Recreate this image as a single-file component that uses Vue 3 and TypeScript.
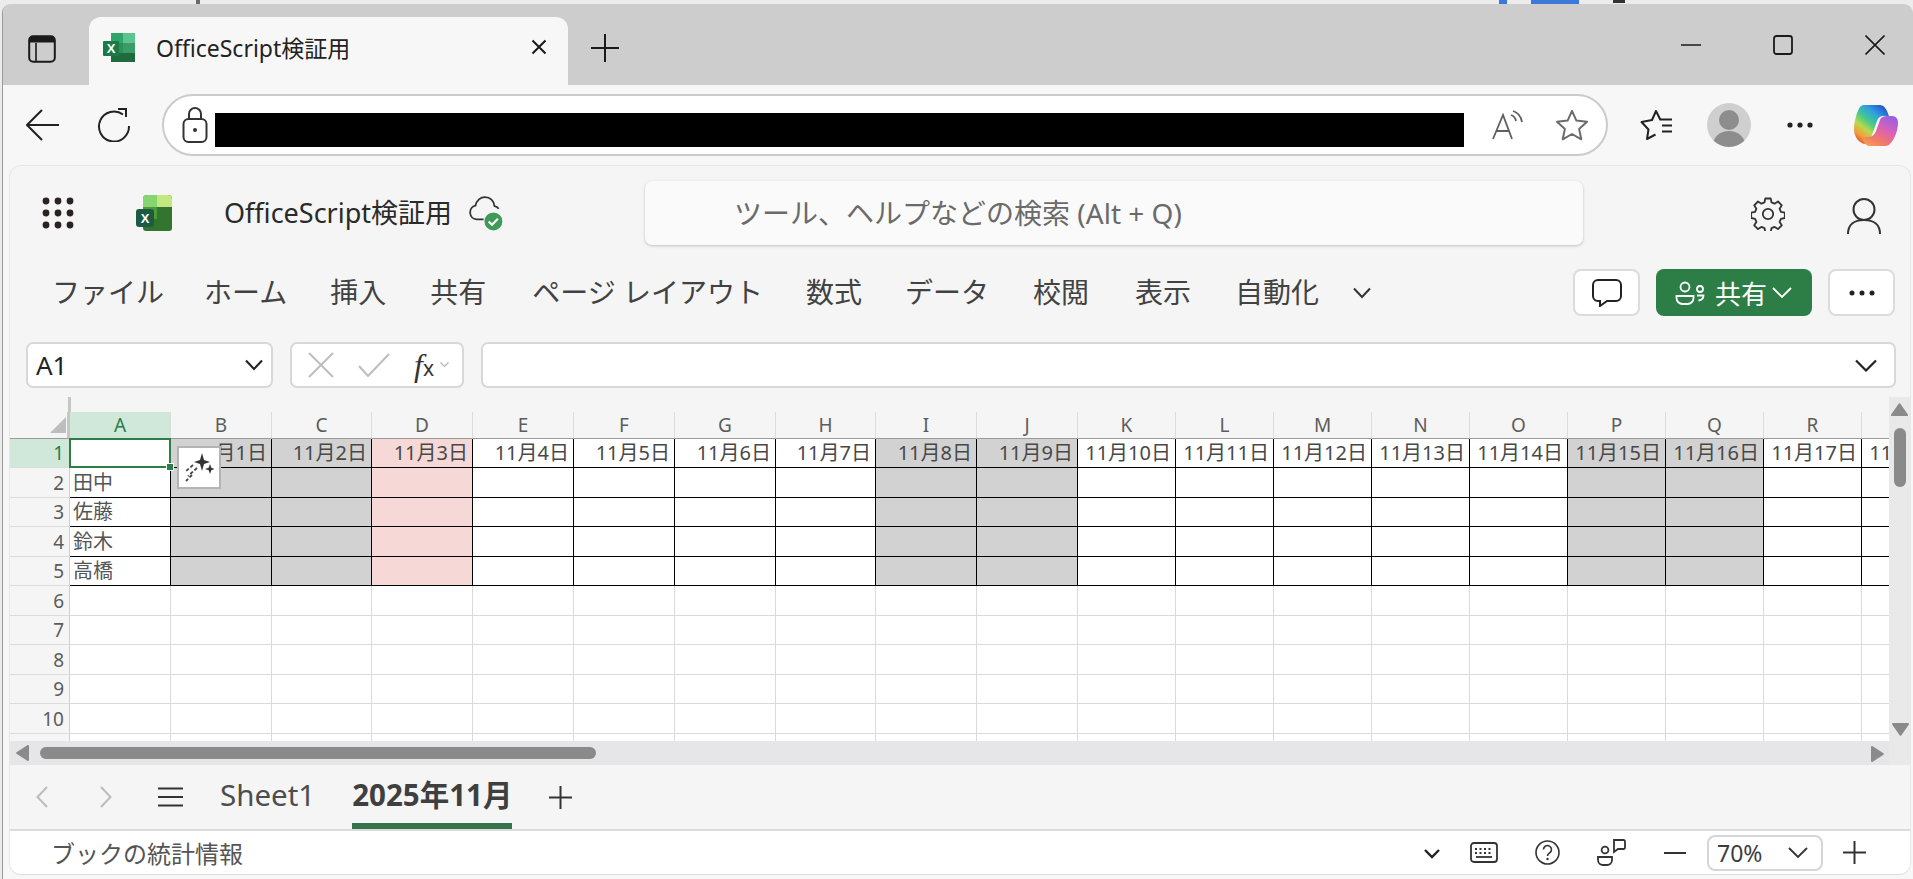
<script setup lang="ts">
interface Col { letter: string; width: number; date: string; tone: string }
const widths = [101,101,100,101,101,101,101,100,101,101,98,98,98,98,98,98,98,98,98]
const letters = 'ABCDEFGHIJKLMNOPQRS'.split('')
const weekend = ['B','C','I','J','P','Q']
const cols: Col[] = letters.map((letter, i) => ({
  letter,
  width: widths[i],
  date: i === 0 ? '' : `11月${i}日`,
  tone: weekend.includes(letter) ? 'gray' : letter === 'D' ? 'pink' : ''
}))
const rowHeights = [29,30,29,30,29,30,29,30,29,30,29]
const names = ['', '田中', '佐藤', '鈴木', '高橋']
const gridTemplate = {
  gridTemplateColumns: `60px ${widths.map(w => w + 'px').join(' ')}`,
  gridTemplateRows: `27px ${rowHeights.map(h => h + 'px').join(' ')}`
}
const menus = ['ファイル','ホーム','挿入','共有','ページ レイアウト','数式','データ','校閲','表示','自動化']
function cellClass(r: number, c: Col): string[] {
  const out: string[] = ['cell']
  if (r < 5) {
    out.push('ruled')
    if (c.tone) out.push(c.tone)
  }
  return out
}
</script>

<template>
  <div class="desk">
    <i class="bit b1"></i><i class="bit b2"></i><i class="bit b3"></i><i class="bit b4"></i>
    <div class="win">
      <div class="tabstrip">
        <svg class="panel-ic" width="28" height="28" viewBox="0 0 28 28"><rect x="1.2" y="1.2" width="25.6" height="25.6" rx="4" fill="none" stroke="#1a1a1a" stroke-width="2"/><path d="M1 7.5V5a4 4 0 0 1 4-4h18a4 4 0 0 1 4 4v2.500z" fill="#1a1a1a"/><path d="M8 8v19" stroke="#1a1a1a" stroke-width="1.600"/></svg>
        <div class="tab">
          <svg width="32" height="29" viewBox="0 0 32 29"><rect x="8" y="0" width="24" height="29" rx="1.500" fill="#2f8f57"/><rect x="20" y="0" width="12" height="10" fill="#5cc58f"/><rect x="8" y="0" width="12" height="10" fill="#2fa56c"/><rect x="20" y="10" width="12" height="10" fill="#3a9d68"/><rect x="8" y="20" width="24" height="9" fill="#1f6b3c"/><rect x="0" y="8" width="16" height="15" rx="1" fill="#1b7b47"/><text x="8" y="20" text-anchor="middle" class="xl">X</text></svg>
          <span class="tab-title">OfficeScript検証用</span>
          <svg class="tab-x" width="16" height="16" viewBox="0 0 16 16"><path d="M1.500 1.500l13 13M14.500 1.500l-13 13" stroke="#1a1a1a" stroke-width="2" fill="none"/></svg>
        </div>
        <svg class="new-tab" width="28" height="28" viewBox="0 0 28 28"><path d="M14 0v28M0 14h28" stroke="#1a1a1a" stroke-width="2"/></svg>
        <div class="winctl">
          <svg width="20" height="20" viewBox="0 0 20 20"><path d="M0 10h20" stroke="#1a1a1a" stroke-width="1.600"/></svg>
          <svg width="20" height="20" viewBox="0 0 20 20"><rect x="1" y="1" width="18" height="18" rx="2.500" fill="none" stroke="#1a1a1a" stroke-width="1.800"/></svg>
          <svg width="20" height="20" viewBox="0 0 20 20"><path d="M0.500 0.500l19 19M19.500 0.500l-19 19" stroke="#1a1a1a" stroke-width="1.600"/></svg>
        </div>
      </div>

      <div class="toolbar">
        <svg class="back" width="34" height="32" viewBox="0 0 34 32"><path d="M1 16h32M16 1L1 16l15 15" fill="none" stroke="#222" stroke-width="2"/></svg>
        <svg class="reload" width="34" height="34" viewBox="0 0 34 34"><path d="M26 6.500A15 15 0 1 0 32 18" fill="none" stroke="#222" stroke-width="2"/><path d="M21 1h8v8" fill="none" stroke="#222" stroke-width="2"/></svg>
        <div class="address">
          <svg class="lock" width="26" height="38" viewBox="0 0 26 38"><rect x="1.500" y="13" width="23" height="23" rx="5" fill="none" stroke="#333" stroke-width="2"/><path d="M7 13V8a6 6 0 0 1 12 0v5" fill="none" stroke="#333" stroke-width="2"/><circle cx="13" cy="24" r="2" fill="#333"/></svg>
          <div class="blackout"></div>
          <svg class="aloud" width="32" height="30" viewBox="0 0 32 30"><path d="M1 29L11 5l9 24M4.500 21h13" fill="none" stroke="#5f5f5f" stroke-width="1.800"/><path d="M19 5c3 1 4.500 3 5 6M21 1c5 1.500 8 5 9 11" fill="none" stroke="#5f5f5f" stroke-width="1.800"/></svg>
          <svg class="star" width="34" height="32" viewBox="0 0 34 32"><path d="M17 2l4.400 9.600 10.600 1.200-7.900 7.100 2.200 10.400L17 25l-9.300 5.300 2.200-10.400L2 12.800l10.600-1.200z" fill="none" stroke="#6b6b6b" stroke-width="2" stroke-linejoin="round"/></svg>
        </div>
        <svg class="favs" width="34" height="32" viewBox="0 0 34 32"><path d="M20.500 11L16 2l-4 9-10.500 2 7 7.500L7 30l8.500-4.500" fill="none" stroke="#222" stroke-width="2" stroke-linejoin="round"/><path d="M20 10.500h12M22 16.500h10M22 22.500h10" stroke="#222" stroke-width="2"/></svg>
        <svg class="avatar" width="44" height="44" viewBox="0 0 44 44"><defs><clipPath id="avc"><circle cx="22" cy="22" r="22"/></clipPath></defs><circle cx="22" cy="22" r="22" fill="#cfcfcf"/><g clip-path="url(#avc)"><circle cx="22" cy="17" r="10" fill="#8d8d8d"/><ellipse cx="22" cy="42" rx="16" ry="14" fill="#8d8d8d"/></g></svg>
        <svg class="tdots" width="26" height="6" viewBox="0 0 26 6"><circle cx="3" cy="3" r="2.600" fill="#222"/><circle cx="13" cy="3" r="2.600" fill="#222"/><circle cx="23" cy="3" r="2.600" fill="#222"/></svg>
        <svg class="copilot" width="44" height="42" viewBox="0 0 44 42"><defs><linearGradient id="cp1" x1=".9" y1="0" x2=".2" y2="1"><stop offset="0" stop-color="#2443c4"/><stop offset=".28" stop-color="#2f9fe2"/><stop offset=".5" stop-color="#45c98d"/><stop offset=".68" stop-color="#b9d84c"/><stop offset=".85" stop-color="#f2a03e"/><stop offset="1" stop-color="#e6512b"/></linearGradient><linearGradient id="cp2" x1=".9" y1="0" x2=".25" y2="1"><stop offset="0" stop-color="#8f5fe8"/><stop offset=".45" stop-color="#dc62b4"/><stop offset=".8" stop-color="#f27c62"/><stop offset="1" stop-color="#f39a54"/></linearGradient></defs><path d="M10 1H25C29 1 31 3 33 7L35 12H30C26 12 24 14 23 17L18 31C16 37 13 40 10 40C4 38 0 32 0 25C0 18 3 7 6 3C7 2 8 1 10 1Z" fill="url(#cp1)"/><path d="M34 12H38C42 12 44 15 44 19C44 27 40 36 36 40C35 41 33 42 31 42H16C13 42 11 40 10 38L8 33H15C18 33 21 30 22 27L26 16C27 13 30 12 34 12Z" fill="url(#cp2)"/></svg>
      </div>

      <div class="card">
        <header class="apphead">
          <svg class="apps" width="32" height="32" viewBox="0 0 32 32"><g fill="#2b2320"><circle cx="4" cy="4" r="3.400"/><circle cx="16" cy="4" r="3.400"/><circle cx="28" cy="4" r="3.400"/><circle cx="4" cy="16" r="3.400"/><circle cx="16" cy="16" r="3.400"/><circle cx="28" cy="16" r="3.400"/><circle cx="4" cy="28" r="3.400"/><circle cx="16" cy="28" r="3.400"/><circle cx="28" cy="28" r="3.400"/></g></svg>
          <svg class="xlapp" width="36" height="36" viewBox="0 0 36 36"><path d="M7 4a4 4 0 0 1 4-4h21a4 4 0 0 1 4 4v29a3 3 0 0 1-3 3H10a3 3 0 0 1-3-3z" fill="#33752f"/><path d="M7 4a4 4 0 0 1 4-4h10v12H7z" fill="#87d56e"/><path d="M21 0h11a4 4 0 0 1 4 4v8H21z" fill="#c1e97f"/><path d="M7 12h14v12H7z" fill="#4b9a3a"/><rect x="0" y="14" width="18" height="18" rx="3" fill="#1c5a41"/><text x="9" y="28" text-anchor="middle" class="xl2">X</text></svg>
          <span class="docname">OfficeScript検証用</span>
          <svg class="cloud" width="36" height="36" viewBox="0 0 34 34"><path d="M20 22H8a6.500 6.500 0 0 1-1-12.800C8 4 12 1 16 1c5 0 8.500 3.500 9 8.500 1.500.3 3 1 4 2.500" fill="none" stroke="#333" stroke-width="1.700"/><circle cx="24" cy="24" r="9" fill="#3f9a58" stroke="#f5f5f5" stroke-width="1"/><path d="M19.500 24l3.200 3.200 5.500-5.700" fill="none" stroke="#fff" stroke-width="2"/></svg>
          <div class="search">ツール、ヘルプなどの検索 (Alt + Q)</div>
          <svg class="gear" width="34" height="34" viewBox="0 0 34 34"><g fill="none" stroke="#333" stroke-width="1.800" stroke-linejoin="round"><path d="M14.300 1.500h5.400l.8 3.900 3.100 1.300 3.400-2.200 3.800 3.800-2.200 3.400 1.300 3.100 3.900.8v5.400l-3.900.8-1.300 3.100 2.200 3.400-3.800 3.800-3.400-2.200-3.100 1.300-.8 3.900h-5.400l-.8-3.900-3.100-1.300-3.400 2.200-3.800-3.800 2.200-3.400-1.300-3.100-3.900-.8v-5.400l3.900-.8 1.300-3.100-2.200-3.400 3.800-3.800 3.400 2.200 3.100-1.300z"/><circle cx="17" cy="17" r="5.200"/></g></svg>
          <svg class="user" width="34" height="38" viewBox="0 0 34 38"><circle cx="17" cy="12.500" r="10.500" fill="none" stroke="#333" stroke-width="2"/><path d="M1 37c0-9 6-14 16-14s16 5 16 14" fill="none" stroke="#333" stroke-width="2"/></svg>
        </header>

        <nav class="menus">
          <span v-for="m in menus" :key="m" class="menu">{{ m }}</span>
          <svg class="menu-more" width="18" height="12" viewBox="0 0 18 12"><path d="M1 1.500l8 8.500 8-8.500" fill="none" stroke="#333" stroke-width="2"/></svg>
          <div class="menu-right">
            <button class="wbtn">
              <svg width="30" height="28" viewBox="0 0 30 28"><path d="M6 1h18a5 5 0 0 1 5 5v11a5 5 0 0 1-5 5H15l-7 5v-5H6a5 5 0 0 1-5-5V6a5 5 0 0 1 5-5z" fill="none" stroke="#222" stroke-width="2"/></svg>
            </button>
            <button class="share">
              <svg width="30" height="24" viewBox="0 0 30 24"><circle cx="10" cy="6" r="4.500" fill="none" stroke="#fff" stroke-width="1.800"/><circle cx="25" cy="8" r="3" fill="none" stroke="#fff" stroke-width="1.800"/><path d="M1.500 15h17v2a6 6 0 0 1-6 6h-5a6 6 0 0 1-6-6z" fill="none" stroke="#fff" stroke-width="1.800"/><path d="M22 14.500h6.500c0 3-1.500 4.500-5 5" fill="none" stroke="#fff" stroke-width="1.800"/></svg>
              <span class="share-text">共有</span>
              <svg width="20" height="12" viewBox="0 0 20 12"><path d="M1 1l9 9 9-9" fill="none" stroke="#fff" stroke-width="1.800"/></svg>
            </button>
            <button class="wbtn more">
              <svg width="26" height="6" viewBox="0 0 26 6"><circle cx="3" cy="3" r="2.500" fill="#222"/><circle cx="13" cy="3" r="2.500" fill="#222"/><circle cx="23" cy="3" r="2.500" fill="#222"/></svg>
            </button>
          </div>
        </nav>

        <div class="fbar">
          <div class="fbox namebox">
            <span>A1</span>
            <svg width="18" height="12" viewBox="0 0 18 12"><path d="M1 1.500l8 8.500 8-8.500" fill="none" stroke="#222" stroke-width="2"/></svg>
          </div>
          <div class="fbox fxbox">
            <svg width="26" height="26" viewBox="0 0 26 26"><path d="M1 1l24 24M25 1L1 25" stroke="#bdbdbd" stroke-width="2"/></svg>
            <svg width="32" height="24" viewBox="0 0 32 24"><path d="M1 13l9 10L31 1" fill="none" stroke="#bdbdbd" stroke-width="2"/></svg>
            <span class="fx"><i>f</i><small>x</small></span>
            <svg width="9" height="6" viewBox="0 0 9 6"><path d="M.5.500l4 4 4-4" fill="none" stroke="#b5b5b5" stroke-width="1.200"/></svg>
          </div>
          <div class="fbox finput">
            <svg width="22" height="13" viewBox="0 0 22 13"><path d="M1 1.500l10 10 10-10" fill="none" stroke="#222" stroke-width="2.200"/></svg>
          </div>
        </div>

        <div class="sheetzone">
          <div class="sheetmain">
            <div class="freeze"></div>
            <div class="gridclip">
              <div class="grid" :style="gridTemplate">
                <div class="corner"><i class="tri"></i></div>
                <div v-for="(c, i) in cols" :key="c.letter" class="colh" :class="{ on: i === 0 }">{{ c.letter === 'S' ? '' : c.letter }}</div>
                <template v-for="(h, r) in rowHeights" :key="r">
                  <div class="rowh" :class="{ on: r === 0 }">{{ r < 10 ? r + 1 : '' }}</div>
                  <div v-for="(c, i) in cols" :key="c.letter" :class="cellClass(r, c)">
                    <span v-if="i === 0 && r < 5" class="name">{{ names[r] }}</span>
                    <span v-else-if="r === 0" class="date">{{ c.date }}</span>
                  </div>
                </template>
              </div>
              <div class="selection"><i class="handle"></i></div>
              <div class="magic">
                <svg width="30" height="30" viewBox="0 0 30 30"><path d="M18 0l2 7 6 2-6 2-2 7-2-7-6-2 6-2z" fill="#333"/><path d="M26 11l1.300 3.700 3.700 1.300-3.700 1.300L26 21l-1.300-3.700L21 16l3.700-1.300z" fill="#333"/><path d="M9 12l-8 7M13 15l-9 8M8 22l-6 6" stroke="#444" stroke-width="1.800" stroke-dasharray="3.500 2" fill="none"/></svg>
              </div>
            </div>
            <div class="hscroll">
              <svg width="13" height="16" viewBox="0 0 13 16"><path d="M13 1v14a1 1 0 0 1-1.700.7L.5 8.700a1 1 0 0 1 0-1.400L11.300.3A1 1 0 0 1 13 1z" fill="#8a8a8a"/></svg>
              <div class="hthumb"></div>
            </div>
          </div>
          <div class="vscroll">
            <svg width="17" height="13" viewBox="0 0 17 13"><path d="M1 13h15a1 1 0 0 0 .7-1.700L9.200.5a1 1 0 0 0-1.400 0L.3 11.300A1 1 0 0 0 1 13z" fill="#8a8a8a"/></svg>
            <div class="vthumb"></div>
            <svg class="vdown" width="17" height="13" viewBox="0 0 17 13"><path d="M1 0h15a1 1 0 0 1 .7 1.700L9.200 12.500a1 1 0 0 1-1.400 0L.3 1.700A1 1 0 0 1 1 0z" fill="#8a8a8a"/></svg>
            <svg class="hright" width="13" height="16" viewBox="0 0 13 16"><path d="M0 1v14a1 1 0 0 0 1.700.7l10.800-7a1 1 0 0 0 0-1.400L1.700.3A1 1 0 0 0 0 1z" fill="#8a8a8a"/></svg>
          </div>
        </div>

        <div class="sheets">
          <svg class="sn" width="12" height="22" viewBox="0 0 12 22"><path d="M11 1L1.500 11 11 21" fill="none" stroke="#bcbcbc" stroke-width="2"/></svg>
          <svg class="sn next" width="12" height="22" viewBox="0 0 12 22"><path d="M1 1l9.500 10L1 21" fill="none" stroke="#bcbcbc" stroke-width="2"/></svg>
          <svg class="burger" width="25" height="20" viewBox="0 0 25 20"><path d="M0 1.500h25M0 10h25M0 18.500h25" stroke="#333" stroke-width="2"/></svg>
          <span class="sheet">Sheet1</span>
          <span class="sheet active">2025年11月</span>
          <svg class="addsheet" width="23" height="23" viewBox="0 0 23 23"><path d="M11.500 0v23M0 11.500h23" stroke="#333" stroke-width="2"/></svg>
        </div>

        <footer class="status">
          <span class="stat-label">ブックの統計情報</span>
          <div class="stat-right">
            <svg class="st-chev" width="16" height="10" viewBox="0 0 16 10"><path d="M1 1l7 7 7-7" fill="none" stroke="#222" stroke-width="2.400"/></svg>
            <svg class="st-kb" width="28" height="21" viewBox="0 0 28 21"><rect x="1" y="1" width="26" height="19" rx="3" fill="none" stroke="#333" stroke-width="1.800"/><path d="M6 15h16" stroke="#333" stroke-width="1.800"/><path d="M5 7h18M5 11h18" stroke="#333" stroke-width="1.800" stroke-dasharray="2 2.500"/></svg>
            <svg class="st-help" width="25" height="25" viewBox="0 0 25 25"><circle cx="12.500" cy="12.500" r="11.500" fill="none" stroke="#333" stroke-width="1.600"/><path d="M8.500 9.500a4 4 0 1 1 6 3.500c-1.500.9-2 1.500-2 3" fill="none" stroke="#333" stroke-width="1.600"/><circle cx="12.500" cy="19" r="1.200" fill="#333"/></svg>
            <svg class="st-fb" width="29" height="27" viewBox="0 0 29 27"><circle cx="8" cy="11" r="3.400" fill="none" stroke="#333" stroke-width="1.800"/><path d="M1 18h14v3a5 5 0 0 1-5 5H6a5 5 0 0 1-5-5z" fill="none" stroke="#333" stroke-width="1.800"/><path d="M17 1h10a1.500 1.500 0 0 1 1 1.500v6A1.500 1.500 0 0 1 27 10h-6l-4 3z" fill="none" stroke="#333" stroke-width="1.800"/></svg>
            <svg class="st-minus" width="22" height="4" viewBox="0 0 22 4"><path d="M0 2h22" stroke="#333" stroke-width="2"/></svg>
            <div class="zoombox">
              <span>70%</span>
              <svg width="20" height="12" viewBox="0 0 20 12"><path d="M1 1l9 9 9-9" fill="none" stroke="#333" stroke-width="1.800"/></svg>
            </div>
            <svg class="st-plus" width="23" height="23" viewBox="0 0 23 23"><path d="M11.500 0v23M0 11.500h23" stroke="#333" stroke-width="2"/></svg>
          </div>
        </footer>
      </div>
    </div>
  </div>
</template>

<style>
html, body { margin: 0; overflow: hidden; }
</style>

<style scoped>
.desk {
  position: relative;
  width: 1913px;
  height: 879px;
  background: #ececec;
  overflow: hidden;
  font-family: "Noto Sans", "Noto Sans CJK JP", sans-serif;
  color: #424242;
}
.bit { position: absolute; top: 0; height: 4px; }
.b1 { left: 196px; width: 4px; background: #6a6a6a; }
.b2 { left: 1499px; width: 8px; background: #3b78d8; }
.b3 { left: 1531px; width: 48px; background: #3b78d8; }
.b4 { left: 1613px; width: 12px; height: 3px; background: #333; }
.win {
  position: absolute;
  left: 2px;
  top: 4px;
  width: 1911px;
  height: 875px;
  display: flex;
  flex-direction: column;
  background: #f7f7f7;
  border-top-left-radius: 9px;
  border-top-right-radius: 9px;
  border-left: 1px solid #9a9a9a;
  box-sizing: border-box;
  overflow: hidden;
}
.tabstrip {
  height: 81px;
  flex: none;
  background: #cdcdcd;
  display: flex;
  align-items: flex-start;
  position: relative;
}
.panel-ic { margin: 31px 0 0 25px; }
.tab {
  margin: 13px 0 0 33px;
  width: 479px;
  height: 68px;
  box-sizing: border-box;
  background: #f7f7f7;
  border-radius: 12px 12px 0 0;
  display: flex;
  align-items: center;
  padding: 0 21px 8px 14px;
}
.xl { font: 700 13px "Liberation Sans", sans-serif; fill: #fff; }
.xl2 { font: 700 13px "Liberation Sans", sans-serif; fill: #fff; }
.tab-title { margin-left: 21px; font-size: 23px; color: #222; white-space: nowrap; flex: 1; }
.new-tab { margin: 30px 0 0 23px; }
.winctl {
  margin-left: auto;
  margin-top: 31px;
  margin-right: 28px;
  display: flex;
  gap: 72px;
}
.toolbar {
  height: 80px;
  flex: none;
  display: flex;
  align-items: center;
  box-sizing: border-box;
}
.back { margin-left: 23px; }
.reload { margin-left: 37px; }
.address {
  margin-left: 31px;
  width: 1446px;
  height: 62px;
  box-sizing: border-box;
  border: 2px solid #cbcbcb;
  border-radius: 31px;
  background: #fff;
  display: flex;
  align-items: center;
}
.lock { margin-left: 18px; }
.blackout { margin: 10px 0 0 7px; width: 1249px; height: 34px; background: #000; }
.aloud { margin-left: 28px; }
.star { margin-left: 31px; }
.favs { margin-left: 32px; }
.avatar { margin-left: 33px; }
.tdots { margin-left: 36px; }
.copilot { margin-left: 41px; }
.card {
  flex: 1;
  margin: 0 2px 4px 6px;
  min-height: 0;
  display: flex;
  flex-direction: column;
  background: #f5f5f5;
  border: 1px solid #e6e6e6;
  border-bottom: 1px solid #dcdcdc;
  border-radius: 12px;
  box-sizing: border-box;
  overflow: hidden;
}
.apphead {
  height: 103px;
  flex: none;
  box-sizing: border-box;
  padding-top: 15px;
  display: flex;
  align-items: flex-start;
}
.apps { margin: 16px 0 0 32px; }
.xlapp { margin: 14px 0 0 62px; }
.docname { margin: 11px 0 0 52px; font-size: 27px; color: #2a2a2a; white-space: nowrap; }
.cloud { margin: 15px 0 0 16px; }
.search {
  margin-left: 141px;
  width: 938px;
  height: 64px;
  box-sizing: border-box;
  padding: 0 0 2px 89px;
  display: flex;
  align-items: center;
  background: #fafafa;
  border-radius: 7px;
  box-shadow: 0 1px 3px rgba(0,0,0,.22);
  font-size: 28px;
  color: #6a6a6a;
  white-space: nowrap;
}
.gear { margin: 16px 0 0 168px; }
.user { margin: 16px 0 0 62px; }
.menus {
  height: 47px;
  flex: none;
  display: flex;
  align-items: center;
  padding-left: 42px;
  gap: 43px;
}
.menu { font-size: 28px; line-height: 47px; white-space: nowrap; color: #424242; }
.menu:nth-of-type(2) { margin-left: -3px; }
.menu:nth-of-type(4) { margin-left: 1px; }
.menu:nth-of-type(5) { margin-left: 3px; }
.menu:nth-of-type(8) { margin-left: 1px; }
.menu:nth-of-type(9) { margin-left: 3px; }
.menu:nth-of-type(10) { margin-left: 1px; }
.menu-more { margin-left: -9px; }
.menu-right { margin-left: auto; margin-right: 15px; display: flex; gap: 16px; }
.wbtn {
  width: 67px;
  height: 47px;
  padding: 0;
  border: 2px solid #dcdcdc;
  border-radius: 8px;
  background: #fff;
  display: flex;
  align-items: center;
  justify-content: center;
}
.share {
  width: 156px;
  height: 47px;
  padding: 0 0 0 19px;
  border: 0;
  border-radius: 8px;
  background: #2d7d46;
  color: #fff;
  font: 26px "Noto Sans CJK JP", sans-serif;
  display: flex;
  align-items: center;
  gap: 7px;
}
.share-text { margin: 0 -2px 0 3px; }
.fbar {
  height: 46px;
  margin-top: 26px;
  flex: none;
  display: flex;
  padding: 0 14px 0 16px;
  gap: 17px;
}
.fbox {
  box-sizing: border-box;
  height: 46px;
  background: #fff;
  border: 2px solid #d8d8d8;
  border-radius: 7px;
  display: flex;
  align-items: center;
}
.namebox { width: 247px; padding: 0 8px 0 8px; justify-content: space-between; font-size: 26px; color: #222; }
.fxbox { width: 174px; padding-left: 16px; }
.fxbox svg:nth-child(2) { margin-left: 24px; }
.fx {
  margin-left: 24px;
  width: 26px;
  color: #333;
  line-height: 1;
  white-space: nowrap;
}
.fx i { font: italic 32px "Liberation Serif", serif; }
.fx small { font: 21px "Noto Sans", sans-serif; margin-left: 0; }
.fxbox svg:last-child { margin-left: 0; }
.finput { flex: 1; justify-content: flex-end; padding-right: 17px; }
.sheetzone {
  height: 368px;
  margin-top: 9px;
  flex: none;
  display: flex;
}
.sheetmain { width: 1879px; display: flex; flex-direction: column; }
.freeze {
  height: 15px;
  flex: none;
  margin-left: 58px;
  width: 3px;
  background: #c6c6c6;
}
.gridclip { position: relative; height: 329px; width: 1879px; overflow: hidden; flex: none; background: #fff; }
.grid { display: grid; width: max-content; }
.corner {
  position: relative;
  background: #f5f5f5;
  box-sizing: border-box;
  border-right: 3px solid #c6c6c6;
  border-bottom: 1px solid #9a9a9a;
}
.tri {
  position: absolute;
  left: 40px;
  top: 5px;
  width: 0;
  height: 0;
  border-style: solid;
  border-width: 0 0 16px 16px;
  border-color: transparent transparent #bdbdbd transparent;
}
.colh {
  background: #f5f5f5;
  border-right: 1px solid #dcdcdc;
  border-bottom: 1px solid #9a9a9a;
  box-sizing: border-box;
  display: flex;
  align-items: center;
  justify-content: center;
  font-size: 19px;
  color: #5c5c5c;
}
.colh.on { background: #cfe8da; color: #2b7a49; }
.rowh {
  background: #f5f5f5;
  border-bottom: 1px solid #dcdcdc;
  border-right: 1px solid #cfcfcf;
  box-sizing: border-box;
  display: flex;
  align-items: center;
  justify-content: flex-end;
  padding-right: 5px;
  font-size: 19px;
  color: #5c5c5c;
}
.rowh.on { background: #cfe8da; color: #2b7a49; }
.cell {
  box-sizing: border-box;
  background: #fff;
  border-right: 1px solid #dadada;
  border-bottom: 1px solid #dadada;
  position: relative;
  display: flex;
  align-items: center;
  justify-content: flex-end;
  min-width: 0;
  font-size: 20px;
  color: #4a4a4a;
  line-height: 1;
}
.ruled { border-right: 1px solid #000; border-bottom: 1px solid #000; }
.gray { background: #d2d2d3; }
.pink { background: #f6d9d6; }
.date { white-space: nowrap; padding-right: 4px; color: #484848; }
.name { margin-right: auto; padding-left: 3px; color: #555; }
.selection {
  position: absolute;
  left: 59px;
  top: 26px;
  width: 102px;
  height: 30px;
  box-sizing: border-box;
  border: 2px solid #2d7d46;
  pointer-events: none;
}
.handle {
  position: absolute;
  right: -5px;
  bottom: -5px;
  width: 6px;
  height: 6px;
  background: #2d7d46;
  border: 1px solid #fff;
}
.magic {
  position: absolute;
  left: 167px;
  top: 34px;
  width: 44px;
  height: 43px;
  box-sizing: border-box;
  background: #fff;
  border: 2px solid #b4b4b4;
  display: flex;
  align-items: center;
  justify-content: center;
}
.hscroll {
  height: 24px;
  flex: none;
  background: #e6e6e8;
  display: flex;
  align-items: center;
  padding-left: 6px;
}
.hthumb { margin-left: 11px; width: 556px; height: 12px; border-radius: 6px; background: #8a8a8a; }
.vscroll {
  position: relative;
  flex: 1;
  background: #e9e9e9;
  display: flex;
  flex-direction: column;
  align-items: center;
  padding-top: 6px;
}
.vthumb { margin-top: 12px; width: 12px; height: 59px; border-radius: 6px; background: #8a8a8a; }
.vdown { position: absolute; top: 326px; left: 3px; }
.hright { position: absolute; left: -18px; top: 349px; }
.sheets {
  height: 64px;
  flex: none;
  display: flex;
  align-items: center;
  border-bottom: 2px solid #dcdcdc;
  padding-left: 26px;
}
.sn.next { margin-left: 52px; }
.burger { margin-left: 46px; }
.sheet { height: 64px; line-height: 60px; font-size: 29.500px; color: #4d4d4d; margin-left: 37px; white-space: nowrap; box-sizing: border-box; }
.sheet.active {
  margin-left: 37px;
  font-weight: 700;
  color: #3f3f3f;
  border-bottom: 6px solid #33744c;
}
.addsheet { margin-left: 37px; }
.status {
  flex: 1;
  min-height: 0;
  background: #fff;
  display: flex;
  align-items: center;
}
.stat-label { margin-left: 41px; font-size: 24px; color: #555; white-space: nowrap; }
.stat-right { margin-left: auto; display: flex; align-items: center; padding-right: 44px; }
.st-chev { margin-top: 3px; }
.st-kb { margin-left: 30px; }
.st-help { margin-left: 37px; }
.st-fb { margin-left: 37px; }
.st-minus { margin-left: 38px; }
.zoombox {
  margin-left: 21px;
  width: 116px;
  height: 36px;
  box-sizing: border-box;
  border: 2px solid #d6d6d6;
  border-radius: 8px;
  display: flex;
  align-items: center;
  justify-content: space-between;
  padding: 0 13px 0 8px;
  font-size: 23px;
  color: #3d3d3d;
}
.st-plus { margin-left: 20px; }
</style>
